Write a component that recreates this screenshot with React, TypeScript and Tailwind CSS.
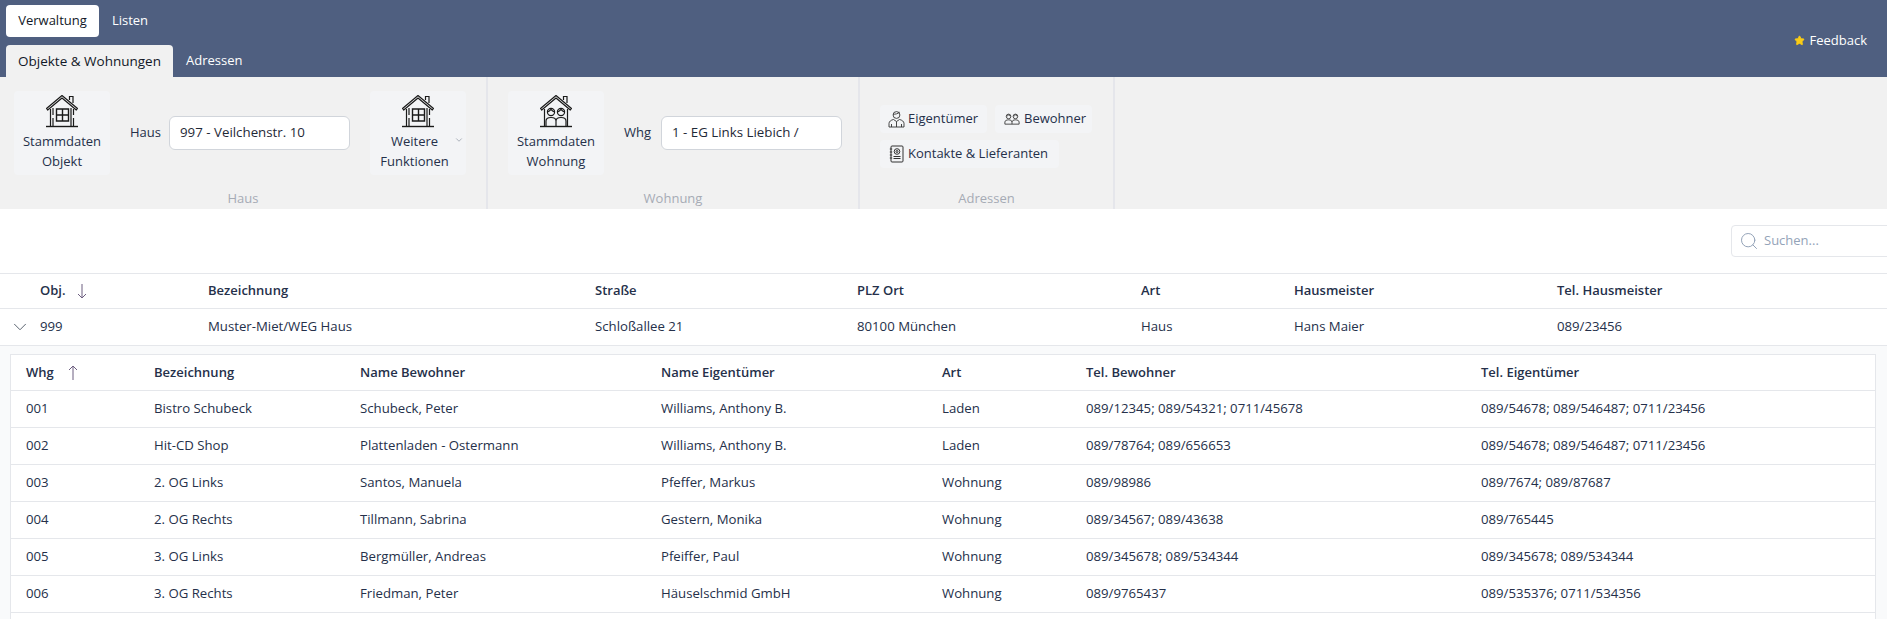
import {ChevronDown, Search, Star} from "lucide-react";

const outerCols = "grid grid-cols-[40px_168px_387px_262px_284px_153px_263px_1fr] items-center";
const innerCols = "grid grid-cols-[128px_206px_301px_281px_144px_395px_1fr] items-center";

const objRow = ["999", "Muster-Miet/WEG Haus", "Schloßallee 21", "80100 München", "Haus", "Hans Maier", "089/23456"];

const wohnungen = [
    ["001", "Bistro Schubeck", "Schubeck, Peter", "Williams, Anthony B.", "Laden", "089/12345; 089/54321; 0711/45678", "089/54678; 089/546487; 0711/23456"],
    ["002", "Hit-CD Shop", "Plattenladen - Ostermann", "Williams, Anthony B.", "Laden", "089/78764; 089/656653", "089/54678; 089/546487; 0711/23456"],
    ["003", "2. OG Links", "Santos, Manuela", "Pfeffer, Markus", "Wohnung", "089/98986", "089/7674; 089/87687"],
    ["004", "2. OG Rechts", "Tillmann, Sabrina", "Gestern, Monika", "Wohnung", "089/34567; 089/43638", "089/765445"],
    ["005", "3. OG Links", "Bergmüller, Andreas", "Pfeiffer, Paul", "Wohnung", "089/345678; 089/534344", "089/345678; 089/534344"],
    ["006", "3. OG Rechts", "Friedman, Peter", "Häuselschmid GmbH", "Wohnung", "089/9765437", "089/535376; 0711/534356"],
];

const HouseShell = ({children}: {children: React.ReactNode}) => (
    <svg width="34" height="34" viewBox="0 0 34 34" fill="none" stroke="#1a1a1a" strokeWidth="1.2">
        <path d="M1.500 14.500 17 1.500l15.500 13-1.200 1.500L17 4 2.700 16z" strokeLinejoin="round"/>
        <path d="M24.500 6V2.500h3.500V9"/>
        <path d="M1 32.500h32" strokeWidth="1.400"/>
        {children}
    </svg>
);

const HouseIcon = () => (
    <HouseShell>
        <path d="M5.500 15v17.500M8 14v7M8 24v8.500M28.500 15v6M28.500 24v8.500M26 14v18.500"/>
        <path d="M11.500 15h12v12h-12zM17.500 15v12M11.500 21h12" strokeWidth="1.400"/>
    </HouseShell>
);

const PeopleHouseIcon = () => (
    <HouseShell>
        <path d="M5.500 15v17.500M28.500 15v17.500"/>
        <circle cx="12" cy="18" r="3.600"/>
        <circle cx="22" cy="18" r="3.600"/>
        <path d="M8.400 18c1.600-.6 2.600-1.400 3.600-2.600 1 1.200 2 2 3.600 2.600M18.400 18c1.600-.6 2.600-1.400 3.600-2.600 1 1.200 2 2 3.600 2.600"/>
        <path d="M7 32v-5c0-2 2-3.500 5-3.500s5 1.500 5 3.500c0-2 2-3.500 5-3.500s5 1.500 5 3.500v5M17 27v5"/>
    </HouseShell>
);

const OwnerIcon = () => (
    <svg width="17" height="18" viewBox="0 0 17 18" fill="none" stroke="#333" strokeWidth="0.9">
        <circle cx="8.500" cy="5" r="3.400"/>
        <path d="M5.200 4.200c1.500.2 4.800-.4 6.400-2M1 17v-3.500c0-2 2-3.500 4.500-4l3 2 3-2c2.500.5 4.500 2 4.500 4V17zM8.500 11.500V17M3.500 17v-3M13.500 17v-3"/>
    </svg>
);

const ResidentsIcon = () => (
    <svg width="18" height="12" viewBox="0 0 18 14" fill="none" stroke="#333" strokeWidth="1">
        <circle cx="5" cy="4" r="2.700"/>
        <circle cx="13" cy="4" r="2.700"/>
        <path d="M2.500 3.500c1.200 0 2.200-.5 2.800-1.500.5 1 1.200 1.500 2.200 1.500M10.500 3.500c1.200 0 2.200-.5 2.800-1.500.5 1 1.200 1.500 2.200 1.500"/>
        <path d="M.7 13v-2.500c0-1.500 1.800-2.500 4.300-2.500s4 1 4 2.500c0-1.500 1.500-2.500 4-2.500s4.300 1 4.300 2.500V13zM9 10.500V13"/>
    </svg>
);

const ContactsIcon = () => (
    <svg width="17" height="18" viewBox="-1 0 17 18" fill="none" stroke="#333" strokeWidth="1">
        <rect x="2" y="1" width="12" height="16" rx="1"/>
        <circle cx="8" cy="6.500" r="2.800"/>
        <circle cx="8" cy="6.500" r="1"/>
        <path d="M4.500 11.500h7M4.500 13.500h7M.8 4h2.400M.8 7h2.400M.8 10h2.400M.8 13h2.400"/>
    </svg>
);

const SortArrow = ({up}: {up?: boolean}) => (
    <svg width="10" height="16" viewBox="0 0 10 16" fill="none" stroke="#6d5f80" strokeWidth="1" className={up ? "rotate-180" : ""}>
        <path d="M5 1v14M1 11l4 4 4-4"/>
    </svg>
);

const BigButton = ({icon, lines, chevron}: {icon: React.ReactNode, lines: string[], chevron?: boolean}) => (
    <div className="relative flex h-[84px] w-[96px] flex-col items-center rounded bg-[#f3f4f6] pt-[3px]">
        {icon}
        <div className={`mt-[3px] text-center leading-[20px] ${chevron ? "pr-[7px]" : ""}`}>
            {lines.map(line => <div key={line}>{line}</div>)}
        </div>
        {chevron && <ChevronDown className="absolute right-[2px] top-[44px] text-[#9ca3af]" size={10}/>}
    </div>
);

const SmallButton = ({icon, label, width}: {icon: React.ReactNode, label: string, width: string}) => (
    <div className={`flex h-[28px] items-center gap-[3px] rounded bg-[#f3f4f6] pl-[8px] ${width}`}>
        {icon}
        <span>{label}</span>
    </div>
);

const Field = ({label, value, labelWidth}: {label: string, value: string, labelWidth: string}) => (
    <div className="flex items-center gap-[8px] self-start mt-[25px]">
        <span className={labelWidth}>{label}</span>
        <div className="flex h-[34px] w-[181px] items-center rounded-md border border-[#d1d5db] bg-white pl-[10px] text-[13.3px] text-[#1f2937]">
            {value}
        </div>
    </div>
);

const GroupLabel = ({children}: {children: React.ReactNode}) => (
    <div className="absolute inset-x-0 bottom-[1px] text-center leading-[20px] text-[#a6abb5]">{children}</div>
);

export default function App() {
    return (
        <div className="h-[619px] w-full overflow-hidden bg-white text-[13px] text-[#25304a] [font-family:'Open_Sans',sans-serif]">
            <div className="relative h-[77px] bg-[#4f5f80] text-white">
                <div className="flex h-[45px] items-start gap-[1px] px-[6px] pt-[5px]">
                    <div className="flex h-[32px] w-[93px] items-center justify-center rounded bg-white text-[#111827]">Verwaltung</div>
                    <div className="flex h-[32px] w-[60px] items-center justify-center">Listen</div>
                </div>
                <div className="flex h-[32px] items-center px-[6px]">
                    <div className="flex h-[32px] w-[167px] items-center justify-center rounded-t bg-[#f1f1f1] text-[13.5px] text-[#111827]">Objekte &amp; Wohnungen</div>
                    <div className="ml-[13px]">Adressen</div>
                </div>
                <div className="absolute right-[20px] top-[31px] flex items-center gap-[5px]">
                    <Star size={11} className="fill-[#facc15] text-[#facc15]"/>
                    <span>Feedback</span>
                </div>
            </div>

            <div className="flex h-[132px] bg-[#f1f1f1]">
                <div className="relative flex w-[488px] gap-[20px] border-r-2 border-[#e5e6eb] pl-[14px] pt-[14px]">
                    <BigButton icon={<HouseIcon/>} lines={["Stammdaten", "Objekt"]}/>
                    <Field label="Haus" value="997 - Veilchenstr. 10" labelWidth="w-[31px]"/>
                    <BigButton icon={<HouseIcon/>} lines={["Weitere", "Funktionen"]} chevron/>
                    <GroupLabel>Haus</GroupLabel>
                </div>
                <div className="relative flex w-[372px] gap-[20px] border-r-2 border-[#e5e6eb] pl-[20px] pt-[14px]">
                    <BigButton icon={<PeopleHouseIcon/>} lines={["Stammdaten", "Wohnung"]}/>
                    <Field label="Whg" value="1 - EG Links Liebich /" labelWidth="w-[29px]"/>
                    <GroupLabel>Wohnung</GroupLabel>
                </div>
                <div className="relative flex w-[255px] flex-col gap-[7px] border-r-2 border-[#e5e6eb] pl-[20px] pt-[28px]">
                    <div className="flex gap-[8px]">
                        <SmallButton icon={<OwnerIcon/>} label="Eigentümer" width="w-[107px]"/>
                        <SmallButton icon={<ResidentsIcon/>} label="Bewohner" width="w-[97px]"/>
                    </div>
                    <SmallButton icon={<ContactsIcon/>} label="Kontakte & Lieferanten" width="w-[179px]"/>
                    <GroupLabel>Adressen</GroupLabel>
                </div>
            </div>

            <div className="flex h-[65px] justify-end border-b border-[#e5e7eb] pt-[16px]">
                <div className="mr-[-44px] flex h-[32px] w-[200px] items-center gap-[5px] rounded border border-[#e5e7eb] pl-[7px] text-[#94a3b8]">
                    <Search size={20} strokeWidth={1.2}/>
                    <span>Suchen...</span>
                </div>
            </div>

            <div className={`${outerCols} h-[35px] border-b border-[#e5e7eb] font-semibold`}>
                <div/>
                <div className="flex items-center gap-[11px]">Obj. <SortArrow/></div>
                {["Bezeichnung", "Straße", "PLZ Ort", "Art", "Hausmeister", "Tel. Hausmeister"].map(h => <div key={h}>{h}</div>)}
            </div>
            <div className={`${outerCols} h-[37px] border-b border-[#e5e7eb] text-[13.2px]`}>
                <ChevronDown size={22} strokeWidth={1} className="ml-[9px] text-[#4b5563]"/>
                {objRow.map(c => <div key={c}>{c}</div>)}
            </div>

            <div className="h-[400px] bg-[#f9fafb] pl-[10px] pr-[11px] pt-[8px]">
                <div className="h-full border border-[#e5e7eb] bg-white">
                    <div className={`${innerCols} h-[36px] border-b border-[#e5e7eb] pl-[15px] font-semibold`}>
                        <div className="flex items-center gap-[14px]">Whg <SortArrow up/></div>
                        {["Bezeichnung", "Name Bewohner", "Name Eigentümer", "Art", "Tel. Bewohner", "Tel. Eigentümer"].map(h => <div key={h}>{h}</div>)}
                    </div>
                    {wohnungen.map(row => (
                        <div className={`${innerCols} h-[37px] border-b border-[#e5e7eb] pl-[15px] text-[13.2px]`} key={row[0]}>
                            {row.map((c, i) => <div key={i}>{c}</div>)}
                        </div>
                    ))}
                </div>
            </div>
        </div>
    );
}
